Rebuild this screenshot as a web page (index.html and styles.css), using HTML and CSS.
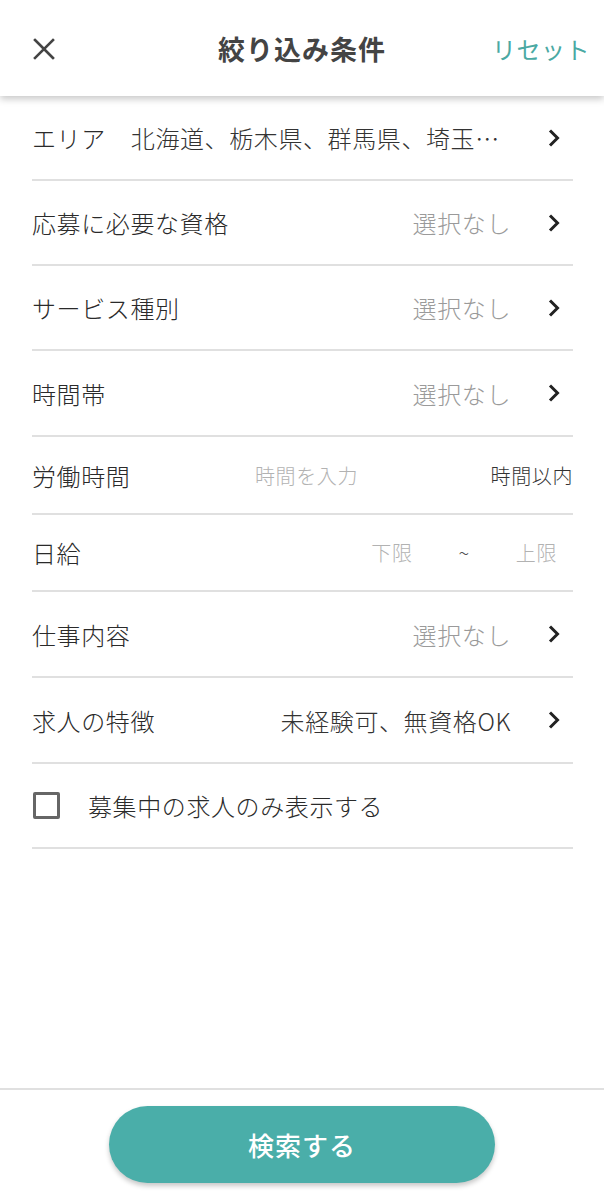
FILE: index.html
```html
<!DOCTYPE html>
<html lang="ja">
<head>
<meta charset="utf-8">
<title>絞り込み条件</title>
<link rel="stylesheet" href="styles.css">
</head>
<body>
<div class="page">
  <header class="header">
    <div class="h-left">
      <svg class="close" width="22" height="22" viewBox="0 0 22 22"><path d="M2 2 L20 20 M20 2 L2 20" stroke="#444" stroke-width="2.6" stroke-linecap="square" fill="none"/></svg>
    </div>
    <div class="title">絞り込み条件</div>
    <div class="h-right"><span class="reset">リセット</span></div>
  </header>

  <main class="list">
    <div class="row row-first">
      <span class="label">エリア</span>
      <span class="value area">北海道、栃木県、群馬県、埼玉…</span>
      <svg class="chev" width="14" height="20" viewBox="0 0 14 20"><path d="M3 2.5 L10.5 10 L3 17.5" stroke="#222" stroke-width="3" fill="none"/></svg>
    </div>
    <div class="row">
      <span class="label">応募に必要な資格</span>
      <span class="value muted">選択なし</span>
      <svg class="chev" width="14" height="20" viewBox="0 0 14 20"><path d="M3 2.5 L10.5 10 L3 17.5" stroke="#222" stroke-width="3" fill="none"/></svg>
    </div>
    <div class="row">
      <span class="label">サービス種別</span>
      <span class="value muted">選択なし</span>
      <svg class="chev" width="14" height="20" viewBox="0 0 14 20"><path d="M3 2.5 L10.5 10 L3 17.5" stroke="#222" stroke-width="3" fill="none"/></svg>
    </div>
    <div class="row row-tall">
      <span class="label">時間帯</span>
      <span class="value muted">選択なし</span>
      <svg class="chev" width="14" height="20" viewBox="0 0 14 20"><path d="M3 2.5 L10.5 10 L3 17.5" stroke="#222" stroke-width="3" fill="none"/></svg>
    </div>
    <div class="row row-input">
      <span class="label label-fixed">労働時間</span>
      <span class="placeholder grow">時間を入力</span>
      <span class="suffix">時間以内</span>
    </div>
    <div class="row row-input row-input-short">
      <span class="label">日給</span>
      <span class="range">
        <span class="placeholder">下限</span>
        <span class="tilde">~</span>
        <span class="placeholder">上限</span>
      </span>
    </div>
    <div class="row row-tall">
      <span class="label">仕事内容</span>
      <span class="value muted">選択なし</span>
      <svg class="chev" width="14" height="20" viewBox="0 0 14 20"><path d="M3 2.5 L10.5 10 L3 17.5" stroke="#222" stroke-width="3" fill="none"/></svg>
    </div>
    <div class="row row-tall">
      <span class="label">求人の特徴</span>
      <span class="value">未経験可、無資格OK</span>
      <svg class="chev" width="14" height="20" viewBox="0 0 14 20"><path d="M3 2.5 L10.5 10 L3 17.5" stroke="#222" stroke-width="3" fill="none"/></svg>
    </div>
    <div class="row row-check">
      <span class="checkbox"></span>
      <span class="label">募集中の求人のみ表示する</span>
    </div>
  </main>

  <footer class="footer">
    <button class="search">検索する</button>
  </footer>
</div>
</body>
</html>
```

FILE: styles.css
```css
* { box-sizing: border-box; }
html, body { margin: 0; padding: 0; background: #fff; }
body {
  font-family: "Noto Sans CJK JP", "Noto Sans", sans-serif;
  color: #333;
}
.page {
  display: flex;
  flex-direction: column;
  min-height: 100vh;
}
.header {
  height: 96px;
  display: grid;
  grid-template-columns: 1fr auto 1fr;
  align-items: center;
  padding: 0 14px;
  background: #fff;
  box-shadow: 0 3px 7px rgba(0,0,0,0.22);
  position: relative;
  z-index: 2;
}
.h-left { display: flex; align-items: center; padding-left: 19px; }
.close { display: block; margin-top: 2px; }
.title {
  font-size: 27px;
  font-weight: 700;
  color: #444;
  letter-spacing: 1px;
}
.h-right { display: flex; justify-content: flex-end; }
.reset {
  font-size: 24px;
  color: #4aa9a3;
  letter-spacing: 0.5px;
}
.list {
  flex: 1;
  padding: 0 31px 0 32px;
}
.row {
  height: 85px;
  display: flex;
  align-items: center;
  border-bottom: 2px solid #e0e0e0;
  font-size: 24px;
  font-weight: 300;
  letter-spacing: 0.6px;
}
.row-tall { height: 86px; }
.row-input { height: 78px; }
.row-input-short { height: 77px; }
.row-check { height: 85px; }
.label { flex: none; color: #2a2a2a; }
.value {
  flex: 1;
  text-align: right;
  white-space: nowrap;
  overflow: hidden;
  margin-right: 36px;
  color: #333;
}
.value.area {
  text-align: left;
  margin-left: 25px;
  margin-right: 40px;
}
.muted { color: #9a9a9a; }
.chev { flex: none; display: block; margin-right: 12px; }
.label-fixed { width: 223px; }
.placeholder {
  color: #b2b2b2;
  font-size: 20px;
}
.grow { flex: 1; }
.suffix { font-size: 20px; color: #333; }
.range {
  margin-left: auto;
  display: flex;
  align-items: center;
  padding-right: 16px;
}
.tilde {
  margin: 0 46px;
  font-size: 20px;
  color: #555;
}
.checkbox {
  width: 27px;
  height: 27px;
  border: 3px solid #666;
  border-radius: 2px;
  margin-left: 1px;
  margin-right: 28px;
  flex: none;
}
.footer {
  border-top: 2px solid #e0e0e0;
  padding: 16px 0 17px;
  display: flex;
  justify-content: center;
}
.search {
  width: 386px;
  height: 77px;
  border: none;
  border-radius: 39px;
  background: #4aaea9;
  color: #fff;
  font-family: "Noto Sans CJK JP", "Noto Sans", sans-serif;
  font-size: 26px;
  font-weight: 500;
  letter-spacing: 1px;
  box-shadow: 0 3px 5px rgba(0,0,0,0.22);
}
```
